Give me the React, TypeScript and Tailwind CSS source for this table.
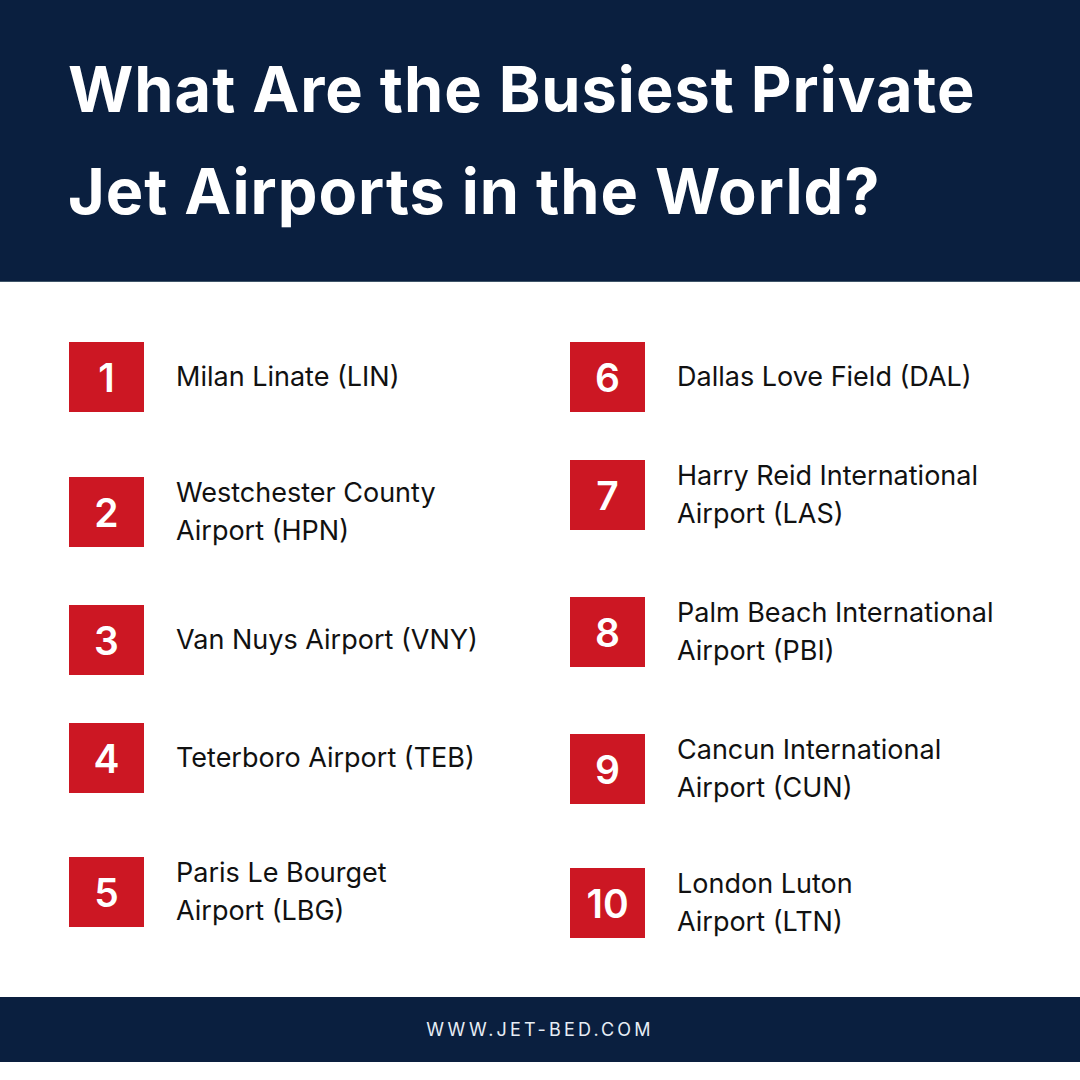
import React from "react";

type Item = { n: string; lines: string[]; mt: string };

const left: Item[] = [
  { n: "1", lines: ["Milan Linate (LIN)"], mt: "mt-[60px]" },
  { n: "2", lines: ["Westchester County", "Airport (HPN)"], mt: "mt-[65px]" },
  { n: "3", lines: ["Van Nuys Airport (VNY)"], mt: "mt-[58px]" },
  { n: "4", lines: ["Teterboro Airport (TEB)"], mt: "mt-[48px]" },
  { n: "5", lines: ["Paris Le Bourget", "Airport (LBG)"], mt: "mt-[64px]" },
];

const right: Item[] = [
  { n: "6", lines: ["Dallas Love Field (DAL)"], mt: "mt-[60px]" },
  { n: "7", lines: ["Harry Reid International", "Airport (LAS)"], mt: "mt-[48px]" },
  { n: "8", lines: ["Palm Beach International", "Airport (PBI)"], mt: "mt-[67px]" },
  { n: "9", lines: ["Cancun International", "Airport (CUN)"], mt: "mt-[67px]" },
  { n: "10", lines: ["London Luton", "Airport (LTN)"], mt: "mt-[64px]" },
];

function Row({ item }: { item: Item }) {
  return (
    <div className={`flex h-[70px] items-center ${item.mt}`}>
      <div className="flex h-[70px] w-[75px] shrink-0 items-center justify-center bg-[#cc1723] text-[39px] font-semibold leading-none text-white">
        {item.n}
      </div>
      <div className="ml-[32px] text-[27px] font-normal leading-[38px] text-[#111111]">
        {item.lines.map((l, i) => (
          <div key={i} className="whitespace-nowrap">
            {l}
          </div>
        ))}
      </div>
    </div>
  );
}

export default function App() {
  return (
    <div
      className="h-[1080px] w-[1080px] overflow-hidden bg-white"
      style={{ fontFamily: "Inter, 'Noto Sans', sans-serif" }}
    >
      <header className="h-[282px] border-b border-[#3e5468] bg-[#0a1f3f] pl-[68px] pt-[38px]">
        <h1 className="text-[63px] font-bold leading-[102px] tracking-[1px] text-white">
          <div>What Are the Busiest Private</div>
          <div>Jet Airports in the World?</div>
        </h1>
      </header>
      <main className="grid h-[715px] grid-cols-[501px_1fr] pl-[69px]">
        <div className="flex flex-col">
          {left.map((it) => (
            <Row key={it.n} item={it} />
          ))}
        </div>
        <div className="flex flex-col">
          {right.map((it) => (
            <Row key={it.n} item={it} />
          ))}
        </div>
      </main>
      <footer className="flex h-[65px] items-center justify-center bg-[#0a1f3f] text-[18px] tracking-[3.2px] text-[#e6edf5]">
        WWW.JET-BED.COM
      </footer>
    </div>
  );
}
